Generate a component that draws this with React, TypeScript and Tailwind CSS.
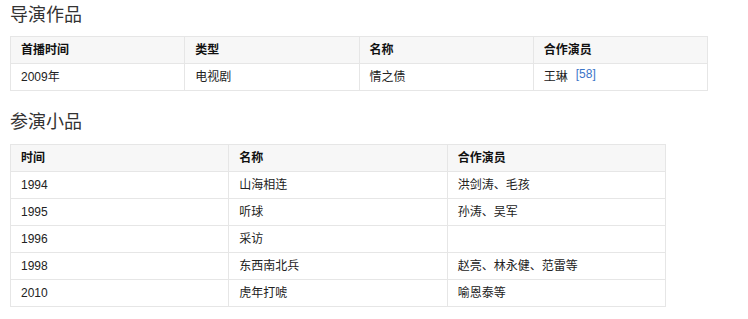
const directed = [{ date: "2009年", type: "电视剧", name: "情之债", cast: "王琳", ref: "[58]" }]

const sketches = [
  { year: "1994", name: "山海相连", cast: "洪剑涛、毛孩" },
  { year: "1995", name: "听球", cast: "孙涛、吴军" },
  { year: "1996", name: "采访", cast: "" },
  { year: "1998", name: "东西南北兵", cast: "赵亮、林永健、范雷等" },
  { year: "2010", name: "虎年打唬", cast: "喻恩泰等" },
]

const th = "border border-[#e6e6e6] bg-[#f7f7f7] px-[10px] h-[27px] text-left font-bold text-[12px] text-[#111]"
const td = "border border-[#e6e6e6] px-[10px] h-[27px] text-[12px] text-[#222]"

export default function App() {
  return (
    <div
      className="bg-white w-[748px] h-[319px] pl-[10px] pt-[3px]"
      style={{ fontFamily: '"Liberation Sans", Arial, "Noto Sans CJK SC", sans-serif' }}
    >
      <h2 className="text-[18px] leading-[24px] text-[#333] mb-[9px]">导演作品</h2>
      <table className="border-collapse table-fixed w-[698px]">
        <thead>
          <tr>
            <th className={th}>首播时间</th>
            <th className={th}>类型</th>
            <th className={th}>名称</th>
            <th className={th}>合作演员</th>
          </tr>
        </thead>
        <tbody>
          {directed.map((row) => (
            <tr key={row.name}>
              <td className={td}>{row.date}</td>
              <td className={td}>{row.type}</td>
              <td className={td}>{row.name}</td>
              <td className={td}>
                {row.cast}
                <sup className="ml-2 text-[12px] text-[#3b75c8] relative -top-[3px]">{row.ref}</sup>
              </td>
            </tr>
          ))}
        </tbody>
      </table>

      <h2 className="text-[18px] leading-[24px] text-[#333] mt-[19px] mb-[10px]">参演小品</h2>
      <table className="border-collapse table-fixed w-[656px]">
        <thead>
          <tr>
            <th className={th}>时间</th>
            <th className={th}>名称</th>
            <th className={th}>合作演员</th>
          </tr>
        </thead>
        <tbody>
          {sketches.map((row) => (
            <tr key={row.year}>
              <td className={td}>{row.year}</td>
              <td className={td}>{row.name}</td>
              <td className={td}>{row.cast}</td>
            </tr>
          ))}
        </tbody>
      </table>
    </div>
  )
}
